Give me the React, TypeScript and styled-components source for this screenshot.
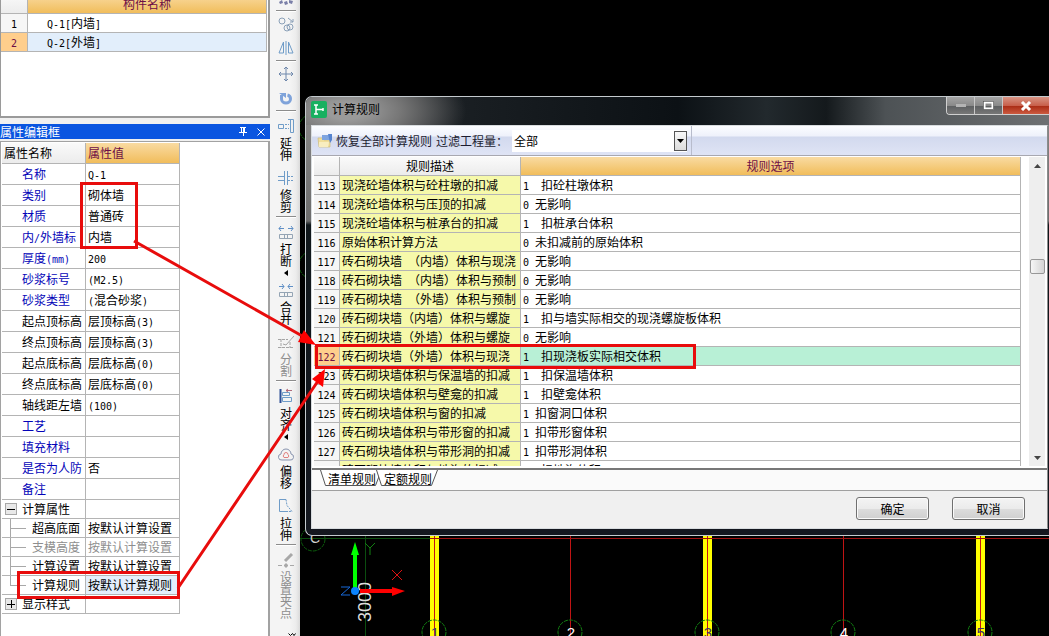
import React, { useState } from "react";
import styled, { createGlobalStyle, css } from "styled-components";

const GlobalStyle = createGlobalStyle`
  * { box-sizing: border-box; }
  body {
    margin: 0;
    background: #000;
    color: #000;
    font: 12px/18px "Noto Sans CJK SC", sans-serif;
    overflow: hidden;
  }
  button, select {
    font: inherit;
    color: inherit;
    margin: 0;
    padding: 0;
    border: 0;
    background: none;
  }
  svg { display: block; flex: none; }
`;

const LINE = "#b4b4b4";
const orange = "linear-gradient(#f9dba2, #f1bd5b)";
const grayHead = "linear-gradient(#fafafa, #ececec)";

/* ---------- text with half-width Latin characters ---------- */

const Half = styled.span`
  font-family: "DejaVu Sans Mono", monospace;
  font-size: 10px;
  line-height: 10px;
  white-space: pre;
`;

function Mixed({ children }: { children: string }) {
  return (
    <>
      {children
        .split(/([\x20-\x7e]+)/)
        .filter(Boolean)
        .map((part, i) => (/^[\x20-\x7e]/.test(part) ? <Half key={i}>{part}</Half> : part))}
    </>
  );
}

/* ---------- page frame ---------- */

const Page = styled.div`
  position: relative;
  display: flex;
  height: 100vh;
  overflow: hidden;
`;

const Dock = styled.aside`
  flex: none;
  display: flex;
  flex-direction: column;
  gap: 6px;
  width: 270px;
  background: #f0f0f0;
`;

const ListPanel = styled.section`
  flex: none;
  height: 118px;
  overflow: hidden;
  background: #fff;
  border: 1px solid #9a9a9a;
  border-width: 0 2px 2px 1px;
  padding-right: 1px;
`;

const Grid = styled.table`
  width: 100%;
  table-layout: fixed;
  border-collapse: separate;
  border-spacing: 0;
  th, td {
    padding: 0;
    font-weight: 400;
    border: 1px solid ${LINE};
    border-width: 0 1px 1px 0;
    white-space: nowrap;
    overflow: hidden;
  }
`;

const ComponentGrid = styled(Grid)`
  margin-top: -6px;
`;

const HeadCell = styled.th<{ $active?: boolean; $left?: boolean }>`
  height: 20px;
  background: ${(p) => (p.$active ? orange : grayHead)};
  color: ${(p) => (p.$active ? "#6e0f46" : "#000")};
  text-align: ${(p) => (p.$left ? "left" : "center")};
`;

const NumberCell = styled.td<{ $selected?: boolean }>`
  height: 19px;
  text-align: center;
  background: ${(p) => (p.$selected ? "#ffce8c" : "#f6f6f6")};
  color: ${(p) => (p.$selected ? "#6e0f46" : "#000")};
`;

const ComponentCell = styled.td<{ $selected?: boolean }>`
  && { padding-left: 19px; }
  background: ${(p) => (p.$selected ? "#e2eefb" : "#fff")};
`;

/* ---------- property editor ---------- */

const PropertyPanel = styled.section`
  flex: 1;
  display: flex;
  flex-direction: column;
  min-height: 0;
`;

const PanelTitle = styled.header`
  display: flex;
  align-items: center;
  height: 15px;
  color: #fff;
  background: #0a55e0;
  h2 {
    flex: 1;
    margin: 0;
    font: inherit;
  }
`;

const TitleButton = styled.button`
  display: grid;
  place-items: center;
  width: 18px;
  height: 15px;
`;

const PropertyBody = styled.div`
  flex: 1;
  margin-top: 2px;
  padding: 1px 1px 0;
  background: #fff;
  border: 1px solid #a2a2a2;
  border-width: 1px 2px 0 1px;
`;

const PropertyGrid = styled(Grid)`
  width: 178px;
`;

const PropHead = styled(HeadCell)`
  height: 21px;
  && { padding-left: 2px; }
`;

type Tone = "blue" | "black" | "gray";
const tones: Record<Tone, string> = { blue: "#0404b8", black: "#000", gray: "#8e8e8e" };

const PropRow = styled.tr<{ $short?: boolean }>`
  td { height: ${(p) => (p.$short ? "19px" : "21px")}; }
`;

const NameBox = styled.div<{ $tone: Tone; $indent: number }>`
  display: flex;
  align-items: center;
  height: 18px;
  padding-left: ${(p) => p.$indent}px;
  color: ${(p) => tones[p.$tone]};
`;

const ValueCell = styled.td<{ $tone: Tone; $selected?: boolean }>`
  && { padding-left: 2px; }
  color: ${(p) => (p.$tone === "gray" ? tones.gray : "#000")};
  background: ${(p) => (p.$selected ? "#e4effc" : "#fff")};
`;

const TreeToggle = styled.button`
  display: grid;
  place-items: center;
  width: 12px;
  height: 12px;
  margin: 0 5px 0 3px;
  background: #e8e8e8;
  border: 1px solid #a8a8a8;
`;

interface Prop {
  name: string;
  value?: string;
  tone?: Tone;
  kind?: "group-open" | "group-closed" | "child" | "last-child";
  selected?: boolean;
}

const properties: Prop[] = [
  { name: "名称", value: "Q-1" },
  { name: "类别", value: "砌体墙" },
  { name: "材质", value: "普通砖" },
  { name: "内/外墙标", value: "内墙" },
  { name: "厚度(mm)", value: "200" },
  { name: "砂浆标号", value: "(M2.5)" },
  { name: "砂浆类型", value: "(混合砂浆)" },
  { name: "起点顶标高", value: "层顶标高(3)", tone: "black" },
  { name: "终点顶标高", value: "层顶标高(3)", tone: "black" },
  { name: "起点底标高", value: "层底标高(0)", tone: "black" },
  { name: "终点底标高", value: "层底标高(0)", tone: "black" },
  { name: "轴线距左墙", value: "(100)", tone: "black" },
  { name: "工艺" },
  { name: "填充材料" },
  { name: "是否为人防", value: "否" },
  { name: "备注" },
  { name: "计算属性", tone: "black", kind: "group-open" },
  { name: "超高底面", value: "按默认计算设置", tone: "black", kind: "child" },
  { name: "支模高度", value: "按默认计算设置", tone: "gray", kind: "child" },
  { name: "计算设置", value: "按默认计算设置", tone: "black", kind: "child" },
  { name: "计算规则", value: "按默认计算规则", tone: "black", kind: "last-child", selected: true },
  { name: "显示样式", tone: "black", kind: "group-closed" },
];

function PropertyLine({ item }: { item: Prop }) {
  const { name, value = "", tone = "blue", kind, selected } = item;
  const isGroup = kind === "group-open" || kind === "group-closed";
  return (
    <PropRow $short={!!kind}>
      <td>
        <NameBox $tone={tone} $indent={kind ? 0 : 20}>
          {isGroup && (
            <TreeToggle aria-label={name}>
              <svg width="8" height="8" stroke="#000" shapeRendering="crispEdges">
                <path d={kind === "group-open" ? "M0 4.5H8" : "M0 4.5H8M4.5 0V8"} />
              </svg>
            </TreeToggle>
          )}
          {kind && !isGroup && (
            <svg width="30" height="18" fill="none" stroke="#a8a8a8" shapeRendering="crispEdges">
              <path d={kind === "child" ? "M8.5 0V18M8.5 9.5H24" : "M8.5 0V9.5H24"} />
            </svg>
          )}
          <span>
            <Mixed>{name}</Mixed>
          </span>
        </NameBox>
      </td>
      <ValueCell $tone={tone} $selected={selected}>
        <Mixed>{value}</Mixed>
      </ValueCell>
    </PropRow>
  );
}

/* ---------- vertical edit toolbar ---------- */

const ToolStrip = styled.nav`
  flex: none;
  display: flex;
  flex-direction: column;
  align-items: center;
  width: 30px;
  padding-left: 2px;
  overflow: hidden;
  background: linear-gradient(90deg, #f4f4f4 20px, #ececec 26px, #dadada);
`;

const ToolButton = styled.button<{ $disabled?: boolean; $menu?: boolean }>`
  flex: none;
  display: flex;
  flex-direction: column;
  align-items: center;
  gap: 3px;
  width: 22px;
  height: ${(p) => (p.$menu ? "58px" : "52px")};
  padding-top: 6px;
  color: ${(p) => (p.$disabled ? "#8e8e8e" : "#000")};
  span {
    width: 12px;
    line-height: 12px;
    word-break: break-all;
  }
`;

const TallTool = styled(ToolButton)`
  height: 86px;
`;

const MoreButton = styled.button`
  flex: none;
  align-self: flex-end;
  width: 12px;
  height: 8px;
`;

const IconTool = styled.button<{ $cut?: boolean }>`
  flex: none;
  display: flex;
  align-items: ${(p) => (p.$cut ? "flex-end" : "center")};
  justify-content: center;
  width: 22px;
  height: ${(p) => (p.$cut ? "10px" : "24px")};
`;

const Rule = styled.hr`
  flex: none;
  width: 20px;
  height: 2px;
  margin: 0;
  border: 0;
  border-top: 1px solid #8c8c8c;
  background: #fff;
`;

type IconName =
  | "array" | "copy" | "mirror" | "move" | "rotate" | "extend" | "trim"
  | "break" | "merge" | "split" | "align" | "offset" | "stretch" | "grip";

const B = "#6f9cc8";
const icons: Record<IconName, React.ReactNode> = {
  array: (
    <g stroke="none" fill="#7a7fa8">
      <path d="M1 8l3-2 1 3-3 1zM6 8l3-1 1 3-3 1zM11 6l4 1-1 3-3-1z" />
    </g>
  ),
  copy: (
    <g stroke="#8aa0b8">
      <circle cx="4" cy="5" r="3" />
      <circle cx="9" cy="12" r="3" />
      <circle cx="12" cy="11" r="3" />
      <path d="M10 2l5 4M15 3v3h-3" />
    </g>
  ),
  mirror: <path d="M5.500 2v11H1zM10.500 2v11H15zM8 1v14" stroke={B} />,
  move: <path d="M8 1v14M1 8h14M6 3l2-2 2 2M6 13l2 2 2-2M3 6L1 8l2 2M13 6l2 2-2 2" stroke="#6f88ac" />,
  rotate: (
    <g>
      <path d="M3.500 5v4a4.500 4 0 0 0 9 0 4 4 0 0 0-3-4" stroke="#7fa3da" strokeWidth="3" />
      <path d="M1 3h7v5z" fill="#7fa3da" stroke="none" />
    </g>
  ),
  extend: (
    <g stroke={B}>
      <path d="M0.500 6.500h5v4h-5z" />
      <path d="M7 6.500h4M7 10.500h4" strokeDasharray="2 1" />
      <path d="M10 1.500h5.500v13h-3V1.500" />
    </g>
  ),
  trim: (
    <g stroke={B}>
      <path d="M6.500 1v14M9.500 1v14" />
      <path d="M0 6.500h6M0 10.500h6" />
      <path d="M10 6.500h6M10 10.500h6" strokeDasharray="2 1" />
    </g>
  ),
  break: (
    <g>
      <path d="M1 4.500h5M3 2L1 4.500 3 7M10 4.500h5M13 2l2 2.500L13 7" stroke="#5f8fc6" />
      <path d="M1.500 10.500h13v4h-13zM6.500 10.500v4M9.500 10.500v4" stroke="#94a4b4" />
    </g>
  ),
  merge: (
    <g>
      <path d="M1 4.500h5M4 2l2 2.500L4 7M10 4.500h5M12 2l-2 2.500L12 7" stroke="#5f8fc6" />
      <path d="M1.500 10.500h13v4h-13zM6.500 10.500v4M9.500 10.500v4" stroke="#94a4b4" />
    </g>
  ),
  split: (
    <g stroke="#a4a4a4">
      <path d="M0 5.500h10M0 13.500h16M3 5v9M12 8v6" strokeDasharray="3 1" />
      <path d="M5 10l3 1 8-9" />
    </g>
  ),
  align: (
    <g>
      <path d="M2.500 1v14" stroke="#2c4f96" strokeWidth="2" />
      <path d="M4.500 4.500h7v3h-7zM4.500 9.500h9v4h-9z" stroke={B} />
      <path d="M8 2.500h6M10 1L8 2.500 10 4" stroke="#b06a7a" />
    </g>
  ),
  offset: (
    <g>
      <path d="M4 14a3 3 0 0 1-1-6 5 5 0 0 1 10 0 3 3 0 0 1-1 6z" stroke="#8793ae" />
      <path d="M6 11.500a2 2 0 0 1 0-3 2 2 0 0 1 4 0 2 2 0 0 1 0 3z" stroke="#e08080" />
    </g>
  ),
  stretch: (
    <g stroke={B}>
      <path d="M8 1.500H1.500v12H10" />
      <path d="M8 1.500l1 6 5 6h-4" strokeDasharray="2 1" />
    </g>
  ),
  grip: (
    <g stroke="#a8a8a8">
      <path d="M0 13.500h16" strokeDasharray="4 2" />
      <path d="M7 9l7-7" strokeWidth="3" />
      <path d="M7 12h2v3H7z" fill="#a8a8a8" />
    </g>
  ),
};

const Icon = ({ name }: { name: IconName }) => (
  <svg width="16" height="16" viewBox="0 0 16 16" fill="none">
    {icons[name]}
  </svg>
);

const MenuMark = () => (
  <svg width="4" height="6">
    <path d="M4 0v6L0 3z" />
  </svg>
);

/* ---------- drawing area ---------- */

const Canvas = styled.main`
  position: relative;
  flex: 1;
  min-width: 0;
  background: #000;
`;

const Scene = styled.svg`
  position: absolute;
  inset: 0;
  width: 100%;
  height: 100%;
  font-family: "Liberation Sans", sans-serif;
`;

const axes = [
  { x: 134, label: "1", wall: true },
  { x: 270, label: "2", wall: false },
  { x: 407, label: "3", wall: true },
  { x: 543, label: "4", wall: false },
  { x: 680, label: "5", wall: true },
];

function Drawing() {
  return (
    <Scene fill="none" aria-hidden="true">
      <g stroke="#0c5c0c" strokeDasharray="4 1">
        <circle cx="13" cy="128" r="14" />
        <circle cx="13" cy="265" r="14" />
        <circle cx="13" cy="539" r="12" />
      </g>
      <path d="M0 538.500H130M65.500 536V636" stroke="#0b4d0f" />
      <text x="10" y="543" fontSize="14" fill="#ccc">C</text>
      {axes.map((a) => (
        <g key={a.x}>
          {a.wall && <rect x={a.x - 4} y="536" width="9" height="110" fill="#ff0" />}
          <path d={`M${a.x + 0.5} 536V636`} stroke="#c01414" />
          <circle cx={a.x} cy="632" r="12" stroke="#128012" strokeDasharray="4 1" />
          <text
            x={a.x + 1}
            y="638"
            textAnchor="middle"
            fontSize="15"
            fill={a.wall ? "#3c3468" : "#fff"}
          >
            {a.label}
          </text>
        </g>
      ))}
      <path d="M130 538.500H2000" stroke="#a01010" />
      <text transform="translate(71 622) rotate(-90)" fontSize="18" fill="#ddd">3000</text>
      <path d="M55 590V552" stroke="#0f0" strokeWidth="4" />
      <path d="M55 542l4 13h-8z" fill="#0f0" />
      <path d="M60 591H92" stroke="#f00" strokeWidth="4" />
      <path d="M105 591l-13 5v-9z" fill="#f00" />
      <circle cx="55" cy="591" r="4" fill="#0a84ff" />
      <path d="M65 543l5 5 5-5M70 548v7" stroke="#128012" />
      <path d="M92 570l10 10M102 570l-10 10" stroke="#e01010" />
      <path d="M41 587h9l-9 8h9" stroke="#1668d8" />
    </Scene>
  );
}

/* ---------- calculation rule window ---------- */

const Window = styled.section`
  position: absolute;
  left: 5px;
  right: 0;
  top: 96px;
  display: flex;
  flex-direction: column;
  padding: 0 0 6px 5px;
  border: 1px solid #c4cace;
  border-right: 0;
  border-radius: 7px 0 0 7px;
  background: linear-gradient(#8c8c8c, #6c6c6c 124px, #10171b 128px, #14171f);
  overflow: hidden;
`;

const WindowTitle = styled.header`
  display: flex;
  align-items: flex-start;
  height: 28px;
  margin-left: -5px;
  padding-left: 5px;
  background:
    radial-gradient(ellipse 120px 56px at 40px 14px, #9a9a9a 15%, #777 45%, transparent),
    linear-gradient(90deg, #444 0, #1a1f23 150px, #0c1115 50%, #22292d 62%, #14191c 70%, #4d5255 78%, #6e7072);
  h1 {
    flex: 1;
    margin: 3px 0 0 5px;
    font: inherit;
  }
  > svg { margin-top: 4px; }
`;

const Caption = styled.div`
  display: flex;
  height: 18px;
  border: 1px solid #d0d0d0;
  border-width: 0 0 1px 1px;
  border-radius: 0 0 0 4px;
  overflow: hidden;
`;

const CaptionButton = styled.button<{ $close?: boolean }>`
  display: grid;
  place-items: center;
  width: 28px;
  border-right: 1px solid #c8c8c8;
  background: linear-gradient(#a4a4a4, #8a8a8a 50%, #5d5f61 52%, #777);
  ${(p) =>
    p.$close &&
    css`
      width: 46px;
      border-right: 0;
      background: linear-gradient(#d89484, #c8604c 50%, #a92b14 52%, #cc5a40);
    `}
`;

const Client = styled.div`
  display: flex;
  flex-direction: column;
  margin-right: 1px;
  background: #f0f0f0;
  border: 1px solid #d8dcdf;
  border-right-color: #8c8c8c;
`;

const CommandBar = styled.div`
  display: flex;
  align-items: stretch;
  height: 30px;
  background: linear-gradient(#fcfdff, #eef1fb 10px, #d2d9ee 11px, #dfe4f5);
  border-bottom: 1px solid #a8a8b0;
`;

const CommandGroup = styled.div`
  display: flex;
  align-items: center;
  padding: 0 4px 0 5px;
  border-right: 1px solid #b8bccc;
  color: #1c1c30;
`;

const RestoreButton = styled.button`
  display: flex;
  align-items: center;
  gap: 3px;
`;

const FilterLabel = styled.label`
  display: flex;
  align-items: center;
  margin-left: 4px;
  white-space: pre;
`;

const SelectBox = styled.span`
  display: flex;
  align-items: center;
  width: 175px;
  height: 22px;
  margin-left: 4px;
  background: #fff;
`;

const Select = styled.select`
  flex: 1;
  height: 20px;
  padding-left: 2px;
  appearance: none;
  color: #000;
  outline: 0;
`;

const SelectArrow = styled.span`
  display: grid;
  place-items: center;
  width: 13px;
  height: 20px;
  border: 1px solid #555;
  background: linear-gradient(#f8f8f8, #dcdcdc);
  pointer-events: none;
`;

const RuleArea = styled.div`
  display: flex;
  height: 314px;
  padding: 1px 2px 2px;
  background: #fff;
  border-bottom: 2px solid #777;
  overflow: hidden;
`;

const RuleScroll = styled.div`
  flex: 1;
  min-width: 0;
  overflow: hidden;
`;

const RuleHead = styled(HeadCell)`
  height: 19px;
`;

const DescriptionCell = styled.td`
  && { padding-left: 2px; }
  background: #f6f9aa;
`;

const OptionCell = styled.td<{ $selected?: boolean }>`
  && { padding-left: 2px; }
  background: ${(p) => (p.$selected ? "#b8f0d6" : "#fff")};
`;

const ScrollTrack = styled.div`
  display: flex;
  flex-direction: column;
  align-items: center;
  width: 16px;
  margin-left: 8px;
  background: #eee;
`;

const ScrollEnd = styled.button`
  display: grid;
  place-items: center;
  width: 16px;
  height: 17px;
`;

const ScrollThumb = styled.div`
  width: 15px;
  height: 15px;
  margin: 85px 0 auto;
  border: 1px solid #979797;
  border-radius: 2px;
  background: linear-gradient(90deg, #f6f6f6, #d4d4d4);
`;

const TabBar = styled.div`
  display: flex;
  height: 21px;
  padding-left: 12px;
  background: #fafafa;
  border-bottom: 1px solid #a0a0a0;
`;

const Tab = styled.button`
  position: relative;
  width: 56px;
  height: 17px;
  line-height: 16px;
  svg {
    position: absolute;
    left: -4px;
    top: 0;
  }
  span { position: relative; }
`;

const Actions = styled.footer`
  display: flex;
  justify-content: flex-end;
  gap: 23px;
  padding: 6px 22px 8px;
`;

const PushButton = styled.button`
  width: 73px;
  height: 23px;
  border: 1px solid #707070;
  border-radius: 3px;
  background: linear-gradient(#f4f4f4, #ebebeb 50%, #dddddd 51%, #cfcfcf);
  box-shadow: inset 0 0 0 1px #fafafa;
`;

const rules: [number, string, string][] = [
  [113, "现浇砼墙体积与砼柱墩的扣减", "1  扣砼柱墩体积"],
  [114, "现浇砼墙体积与压顶的扣减", "0 无影响"],
  [115, "现浇砼墙体积与桩承台的扣减", "1  扣桩承台体积"],
  [116, "原始体积计算方法", "0 未扣减前的原始体积"],
  [117, "砖石砌块墙 （内墙）体积与现浇", "0 无影响"],
  [118, "砖石砌块墙 （内墙）体积与预制", "0 无影响"],
  [119, "砖石砌块墙 （外墙）体积与预制", "0 无影响"],
  [120, "砖石砌块墙（内墙）体积与螺旋", "1  扣与墙实际相交的现浇螺旋板体积"],
  [121, "砖石砌块墙（外墙）体积与螺旋", "0 无影响"],
  [122, "砖石砌块墙（外墙）体积与现浇", "1  扣现浇板实际相交体积"],
  [123, "砖石砌块墙体积与保温墙的扣减", "1  扣保温墙体积"],
  [124, "砖石砌块墙体积与壁龛的扣减", "1  扣壁龛体积"],
  [125, "砖石砌块墙体积与窗的扣减", "1 扣窗洞口体积"],
  [126, "砖石砌块墙体积与带形窗的扣减", "1 扣带形窗体积"],
  [127, "砖石砌块墙体积与带形洞的扣减", "1 扣带形洞体积"],
  [128, "砖石砌块墙体积与地沟的扣减", "1  扣地沟体积"],
];

function RuleWindow() {
  const [filter, setFilter] = useState("全部");
  return (
    <Window aria-label="计算规则">
      <WindowTitle>
        <svg width="16" height="17" viewBox="0 0 16 17">
          <rect width="16" height="17" rx="2" fill="#18b060" />
          <path d="M3 4h4M5 4v9M3 13h4M5 8.500h7M12 7v3" stroke="#fff" strokeWidth="1.500" fill="none" />
        </svg>
        <h1>计算规则</h1>
        <Caption>
          <CaptionButton aria-label="最小化">
            <svg width="10" height="4"><rect width="10" height="3" fill="#b4b4b4" /></svg>
          </CaptionButton>
          <CaptionButton aria-label="最大化">
            <svg width="11" height="9" fill="none">
              <rect x="1.500" y="1.500" width="8" height="6" stroke="#fff" strokeWidth="2" />
              <rect x="0.500" y="0.500" width="10" height="8" stroke="#444" strokeWidth="0.500" />
            </svg>
          </CaptionButton>
          <CaptionButton $close aria-label="关闭">
            <svg width="12" height="10" stroke="#fff" strokeWidth="3">
              <path d="M2 1l8 8M10 1L2 9" />
            </svg>
          </CaptionButton>
        </Caption>
      </WindowTitle>
      <Client>
        <CommandBar>
          <CommandGroup>
            <RestoreButton>
              <svg width="16" height="16" viewBox="0 0 16 16">
                <path d="M1 5h5l1 2h6v7H2z" fill="#f1de9a" stroke="#cdbb7c" strokeWidth="0.700" />
                <path d="M5 2h8v5H5z" fill="#7ea4e0" />
                <path d="M11 1h4v6l-2 3z" fill="#5583cf" />
                <path d="M2 9h10l-1 5H2z" fill="#f8edc0" />
              </svg>
              恢复全部计算规则
            </RestoreButton>
            <FilterLabel>
              过滤工程量：
              <SelectBox>
                <Select value={filter} onChange={(e) => setFilter(e.target.value)}>
                  <option>全部</option>
                </Select>
                <SelectArrow>
                  <svg width="7" height="4"><path d="M0 0h7L3.500 4z" /></svg>
                </SelectArrow>
              </SelectBox>
            </FilterLabel>
          </CommandGroup>
        </CommandBar>
        <RuleArea>
          <RuleScroll>
            <Grid>
              <colgroup>
                <col width="26" />
                <col width="181" />
                <col />
              </colgroup>
              <thead>
                <tr>
                  <RuleHead />
                  <RuleHead>规则描述</RuleHead>
                  <RuleHead $active>规则选项</RuleHead>
                </tr>
              </thead>
              <tbody>
                {rules.map(([id, text, option]) => (
                  <tr key={id}>
                    <NumberCell $selected={id === 122}>
                      <Mixed>{String(id)}</Mixed>
                    </NumberCell>
                    <DescriptionCell>
                      <Mixed>{text}</Mixed>
                    </DescriptionCell>
                    <OptionCell $selected={id === 122}>
                      <Mixed>{option}</Mixed>
                    </OptionCell>
                  </tr>
                ))}
              </tbody>
            </Grid>
          </RuleScroll>
          <ScrollTrack>
            <ScrollEnd aria-label="向上">
              <svg width="7" height="4"><path d="M0 4h7L3.500 0z" fill="#444" /></svg>
            </ScrollEnd>
            <ScrollThumb />
            <ScrollEnd aria-label="向下">
              <svg width="7" height="4"><path d="M0 0h7L3.500 4z" fill="#444" /></svg>
            </ScrollEnd>
          </ScrollTrack>
        </RuleArea>
        <TabBar>
          {["清单规则", "定额规则"].map((t) => (
            <Tab key={t}>
              <svg width="64" height="17" fill="#fff" stroke="#555">
                <path d="M0.500 0l5 15.500h50L61.500 0" />
              </svg>
              <span>{t}</span>
            </Tab>
          ))}
        </TabBar>
        <Actions>
          <PushButton>确定</PushButton>
          <PushButton>取消</PushButton>
        </Actions>
      </Client>
    </Window>
  );
}

/* ---------- red call-outs over the page ---------- */

const CallOuts = styled.svg`
  position: absolute;
  left: 0;
  top: 0;
  width: 100%;
  height: 100%;
  pointer-events: none;
`;

export default function App() {
  return (
    <Page>
      <GlobalStyle />
      <Dock>
        <ListPanel>
          <ComponentGrid>
            <colgroup>
              <col width="27" />
              <col />
            </colgroup>
            <thead>
              <tr>
                <HeadCell />
                <HeadCell $active>构件名称</HeadCell>
              </tr>
            </thead>
            <tbody>
              <tr>
                <NumberCell><Mixed>1</Mixed></NumberCell>
                <ComponentCell><Mixed>Q-1[内墙]</Mixed></ComponentCell>
              </tr>
              <tr>
                <NumberCell $selected><Mixed>2</Mixed></NumberCell>
                <ComponentCell $selected><Mixed>Q-2[外墙]</Mixed></ComponentCell>
              </tr>
            </tbody>
          </ComponentGrid>
        </ListPanel>
        <PropertyPanel>
          <PanelTitle>
            <h2>属性编辑框</h2>
            <TitleButton aria-label="固定">
              <svg width="8" height="9" fill="none" stroke="#fff" shapeRendering="crispEdges">
                <path d="M1 0.500h6M2.500 0v5M5.500 0v5M4.500 0v5M0 5.500h8M4.500 5v4" />
              </svg>
            </TitleButton>
            <TitleButton aria-label="关闭">
              <svg width="8" height="8" stroke="#fff">
                <path d="M0.500 0.500l7 7M7.500 0.500l-7 7" />
              </svg>
            </TitleButton>
          </PanelTitle>
          <PropertyBody>
            <PropertyGrid>
              <colgroup>
                <col width="84" />
                <col />
              </colgroup>
              <thead>
                <tr>
                  <PropHead $left>属性名称</PropHead>
                  <PropHead $left $active>属性值</PropHead>
                </tr>
              </thead>
              <tbody>
                {properties.map((p) => (
                  <PropertyLine key={p.name} item={p} />
                ))}
              </tbody>
            </PropertyGrid>
          </PropertyBody>
        </PropertyPanel>
      </Dock>

      <ToolStrip>
        <IconTool $cut aria-label="阵列"><Icon name="array" /></IconTool>
        <Rule />
        <IconTool aria-label="复制"><Icon name="copy" /></IconTool>
        <IconTool aria-label="镜像"><Icon name="mirror" /></IconTool>
        <Rule />
        <IconTool aria-label="移动"><Icon name="move" /></IconTool>
        <IconTool aria-label="旋转"><Icon name="rotate" /></IconTool>
        <Rule />
        <ToolButton><Icon name="extend" /><span>延伸</span></ToolButton>
        <ToolButton><Icon name="trim" /><span>修剪</span></ToolButton>
        <Rule />
        <ToolButton $menu><Icon name="break" /><span>打断</span><MenuMark /></ToolButton>
        <ToolButton><Icon name="merge" /><span>合并</span></ToolButton>
        <ToolButton $disabled><Icon name="split" /><span>分割</span></ToolButton>
        <Rule />
        <ToolButton $menu><Icon name="align" /><span>对齐</span><MenuMark /></ToolButton>
        <ToolButton><Icon name="offset" /><span>偏移</span></ToolButton>
        <ToolButton><Icon name="stretch" /><span>拉伸</span></ToolButton>
        <Rule />
        <TallTool $disabled><Icon name="grip" /><span>设置夹点</span></TallTool>
        <MoreButton aria-label="更多">
          <svg width="8" height="8" fill="none" stroke="#000">
            <path d="M0.500 1.500l2 2 2-2M4.500 1.500l1.500 2 1.500-2" />
          </svg>
        </MoreButton>
      </ToolStrip>

      <Canvas>
        <Drawing />
        <RuleWindow />
      </Canvas>

      <CallOuts fill="none" stroke="#e80c0c" strokeWidth="3" aria-hidden="true">
        <rect x="81.500" y="183.500" width="55" height="64" />
        <rect x="18.500" y="572.500" width="160" height="25" />
        <rect x="316.500" y="345.500" width="378" height="22" />
        <path d="M134 241L304 337M178 588L318 381" />
        <path d="M316 345l-18-3 6-12zM325 369l-2 18-11-8z" fill="#f00" stroke="none" />
      </CallOuts>
    </Page>
  );
}
